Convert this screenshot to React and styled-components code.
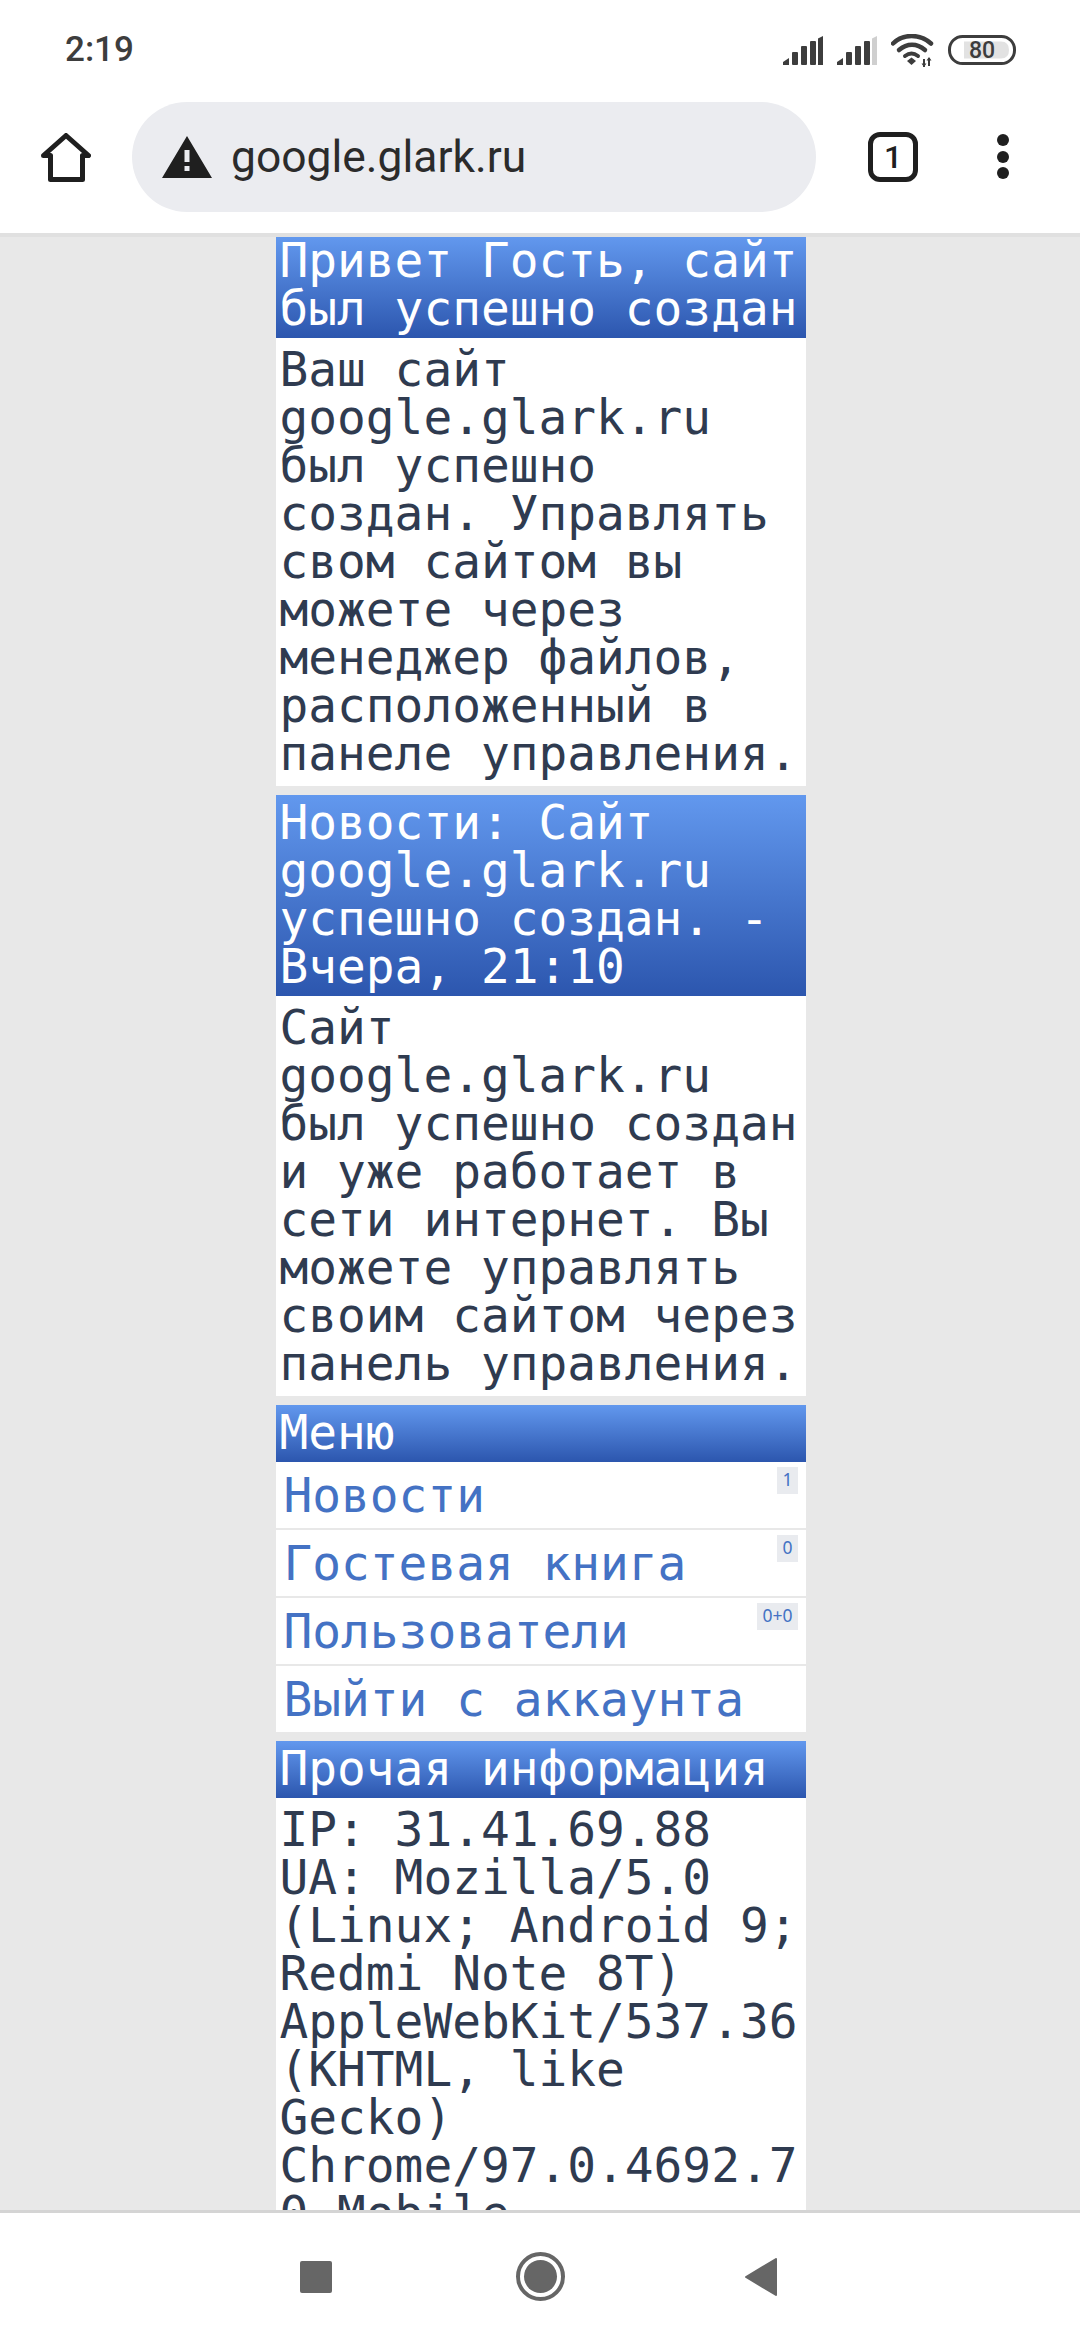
import React from 'react';
import styled, { createGlobalStyle } from 'styled-components';

const Global = createGlobalStyle`
  html, body { margin: 0; padding: 0; background: #fff; }
  #root { width: 1080px; height: 2340px; }
`;
const Screen = styled.div`
  width: 1080px; height: 2340px; display: flex; flex-direction: column; overflow: hidden;
  background: #fff; font-family: "Roboto", "Noto Sans", sans-serif;
`;
const StatusBar = styled.div`
  height: 100px; flex: none; display: flex; align-items: flex-start; justify-content: space-between;
  padding: 30px 64px 0 65px; box-sizing: border-box;
`;
const Clock = styled.div`
  font-size: 35px; line-height: 40px; font-weight: 500; color: #3d3d3d;
`;
const StatusIcons = styled.div`
  display: flex; align-items: center; gap: 14px; height: 40px;
`;
const Toolbar = styled.div`
  height: 133px; flex: none; display: flex; align-items: flex-start; box-sizing: border-box;
  padding-top: 2px;
`;
const HomeBtn = styled.div`
  width: 132px; height: 110px; flex: none; display: flex; align-items: center; justify-content: center;
`;
const Omnibox = styled.div`
  width: 684px; height: 110px; flex: none; border-radius: 55px; background: #ebecf0;
  display: flex; align-items: center; padding-left: 30px; box-sizing: border-box; gap: 19px;
`;
const Url = styled.div`
  font-size: 44.4px; color: #2b2b2b; line-height: 50px;
`;
const TabsBtn = styled.div`
  margin-left: 52px; width: 50px; height: 50px; margin-top: 30px; box-sizing: border-box; flex: none;
  border: 5px solid #1f1f1f; border-radius: 12px; display: flex; align-items: center; justify-content: center;
  font-size: 32px; font-weight: 500; color: #1f1f1f;
`;
const MoreBtn = styled.div`
  margin-left: 79px; margin-top: 32px; display: flex; flex-direction: column; gap: 4.5px; flex: none;
`;
const Dot = styled.span`
  width: 12px; height: 12px; border-radius: 50%; background: #1f1f1f; display: block;
`;
const Page = styled.div`
  flex: 1; min-height: 0; overflow: hidden; background: #e8e8e8; border-top: 4px solid #e0e0e0;
  display: flex; flex-direction: column; align-items: center; gap: 9px; padding: 0 0 0 1px;
  font-family: "DejaVu Sans Mono", monospace; font-size: 47.8px; line-height: 48px;
`;
const Section = styled.section`
  width: 530px; flex: none; display: flex; flex-direction: column;
`;
const Heading = styled.div`
  background: linear-gradient(to bottom, #6298ee, #2c56ae); color: #fff;
  padding: ${p => (p.$clipped ? '0' : '4px')} 4px 5px;
`;
const Body = styled.div`
  background: #fff; color: #2f3b50; padding: 8px 4px 8px; overflow-wrap: anywhere;
`;
const MenuRow = styled.a`
  position: relative; display: block; background: #fff; color: #4472c4; height: 66px; line-height: 68px;
  padding-left: 8px; & + & { margin-top: 2px; }
`;
const Badge = styled.span`
  position: absolute; top: 5px; right: 8px; height: 27px; min-width: 20px; box-sizing: border-box;
  padding: 0 5px; background: #e9ebef; color: #4472c4; font-family: "Noto Sans", sans-serif;
  font-size: 17.5px; line-height: 25px; text-align: center;
`;
const NavBar = styled.div`
  height: 130px; flex: none; box-sizing: border-box; background: #fff; border-top: 3px solid #d4d4d4;
  display: flex; align-items: center; justify-content: center;
`;
const NavSlot = styled.div`
  width: 224px; display: flex; justify-content: center; align-items: center;
`;

const Signal = ({ dim }) => (
  <svg width="40" height="29" viewBox="0 0 40 29">
    <path d="M0 29 V26 L6 22 V29 Z" fill="#3d3d3d" />
    <rect x="9" y="16" width="6" height="13" rx="1" fill="#3d3d3d" />
    <rect x="18" y="10" width="6" height="19" rx="1" fill="#3d3d3d" />
    <rect x="27" y="5" width="6" height="24" rx="1" fill="#3d3d3d" />
    <path d="M35 2.5 L40 0 V29 H35 Z" fill={dim ? '#cfcfcf' : '#3d3d3d'} />
  </svg>
);

export default function App() {
  return (
    <Screen>
      <Global />
      <StatusBar>
        <Clock>2:19</Clock>
        <StatusIcons>
          <Signal />
          <Signal dim />
          <svg width="43" height="33" viewBox="0 0 43 33" fill="none">
            <path d="M2 9.5 C12 -0.5 29 -0.5 40 9.5" stroke="#3d3d3d" strokeWidth="4.5" strokeLinecap="round" />
            <path d="M8 16 C16 9 26 9 34 16" stroke="#3d3d3d" strokeWidth="4.5" strokeLinecap="round" />
            <path d="M14 22 C18 19 23 19 27 22" stroke="#3d3d3d" strokeWidth="4" strokeLinecap="round" />
            <path d="M16 27 L20.5 23.5 L25 27 L20.5 31 Z" fill="#3d3d3d" />
            <path d="M33 25 V33 M38 24 V32" stroke="#3d3d3d" strokeWidth="2" />
            <path d="M33 33 L30.5 29.5 H35.5 Z M38 23 L35.5 26.5 H40.5 Z" fill="#3d3d3d" />
          </svg>
          <svg width="68" height="30" viewBox="0 0 68 30">
            <rect x="1.5" y="1.5" width="65" height="27" rx="13" fill="#fff" stroke="#3d3d3d" strokeWidth="3" />
            <path d="M16 6.5 H53 Q61 6.5 61 15 Q61 23.5 53 23.5 H16 Z" fill="#e2e2e2" />
            <text x="34" y="23" textAnchor="middle" fontFamily="Roboto, sans-serif" fontWeight="500" fontSize="23" fill="#3d3d3d">80</text>
          </svg>
        </StatusIcons>
      </StatusBar>
      <Toolbar>
        <HomeBtn>
          <svg width="50" height="49" viewBox="0 0 50 49" fill="none">
            <path d="M9.5 22.5 H2.5 L25 2.5 L47.5 22.5 H41.5 V46.5 H9.5 Z" stroke="#1f1f1f" strokeWidth="5" strokeLinejoin="round" />
          </svg>
        </HomeBtn>
        <Omnibox>
          <svg width="50" height="42" viewBox="0 0 50 42">
            <path fillRule="evenodd" d="M25 0 L50 42 H0 Z M22.5 14 V26 H27.5 V14 Z M22.5 30 V35 H27.5 V30 Z" fill="#1f1f1f" />
          </svg>
          <Url>google.glark.ru</Url>
        </Omnibox>
        <TabsBtn>1</TabsBtn>
        <MoreBtn><Dot /><Dot /><Dot /></MoreBtn>
      </Toolbar>
      <Page>
        <Section>
          <Heading $clipped>Привет Гость, сайт был успешно создан</Heading>
          <Body>Ваш сайт google.glark.ru был успешно создан. Управлять свом сайтом вы можете через менеджер файлов, расположенный в панеле управления.</Body>
        </Section>
        <Section>
          <Heading>Новости: Сайт google.glark.ru успешно создан. - Вчера, 21:10</Heading>
          <Body>Сайт google.glark.ru был успешно создан и уже работает в сети интернет. Вы можете управлять своим сайтом через панель управления.</Body>
        </Section>
        <Section>
          <Heading>Меню</Heading>
          <MenuRow>Новости<Badge>1</Badge></MenuRow>
          <MenuRow>Гостевая книга<Badge>0</Badge></MenuRow>
          <MenuRow>Пользователи<Badge>0+0</Badge></MenuRow>
          <MenuRow>Выйти с аккаунта</MenuRow>
        </Section>
        <Section>
          <Heading>Прочая информация</Heading>
          <Body>IP: 31.41.69.88<br />UA: Mozilla/5.0 (Linux; Android 9; Redmi Note 8T) AppleWebKit/537.36 (KHTML, like Gecko) Chrome/97.0.4692.70 Mobile Safari/537.36</Body>
        </Section>
      </Page>
      <NavBar>
        <NavSlot>
          <svg width="32" height="32" viewBox="0 0 32 32"><rect width="32" height="32" rx="2" fill="#666" /></svg>
        </NavSlot>
        <NavSlot>
          <svg width="49" height="49" viewBox="0 0 49 49" fill="none">
            <circle cx="24.5" cy="24.5" r="22.5" stroke="#666" strokeWidth="4" />
            <circle cx="24.5" cy="24.5" r="16.5" fill="#666" />
          </svg>
        </NavSlot>
        <NavSlot>
          <svg width="39" height="38" viewBox="0 0 39 38"><path d="M31 1 V37 L1 19 Z" fill="#666" stroke="#666" strokeWidth="2" strokeLinejoin="round" /></svg>
        </NavSlot>
      </NavBar>
    </Screen>
  );
}
